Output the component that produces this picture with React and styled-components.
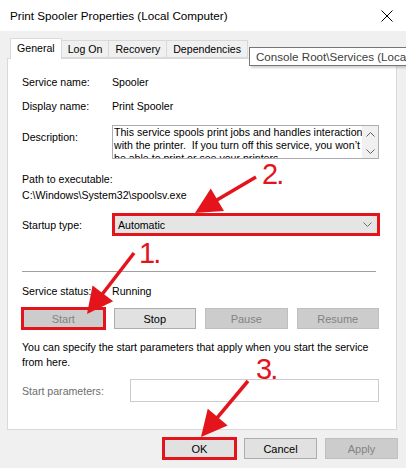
import React from 'react'
import styled, { createGlobalStyle } from 'styled-components'

const RED = '#e3141c'

const GlobalStyle = createGlobalStyle`
  html, body {
    margin: 0;
    padding: 0;
    background: #f0f0f0;
  }
  body {
    font-family: "Liberation Sans", Arial, sans-serif;
    font-size: 10.6px;
    color: #000;
  }
`

const Window = styled.div`
  position: relative;
  width: 406px;
  height: 468px;
  overflow: hidden;
  background: #f0f0f0;
  display: flex;
  flex-direction: column;
`

const TitleBar = styled.div`
  flex: none;
  height: 31px;
  background: #fff;
  display: flex;
  align-items: center;
  justify-content: space-between;
  padding: 0 13px 0 10px;
  font-size: 11.7px;
  color: #000;
`

const TabStrip = styled.div`
  display: flex;
  align-items: flex-end;
  height: 20px;
  margin-top: 7px;
  padding-left: 10px;
  position: relative;
  z-index: 1;
`

const Tab = styled.div`
  box-sizing: border-box;
  height: ${p => (p.active ? '21px' : '18px')};
  margin-bottom: ${p => (p.active ? '-1px' : '0')};
  padding: 0 6px;
  display: flex;
  align-items: center;
  background: ${p => (p.active ? '#fff' : '#f0f0f0')};
  border: 1px solid #d9d9d9;
  border-bottom: ${p => (p.active ? 'none' : '1px solid #d9d9d9')};
  border-left: ${p => (p.first ? '1px solid #d9d9d9' : 'none')};
  padding-bottom: ${p => (p.active ? '3px' : '0')};
`

const Tooltip = styled.div`
  position: absolute;
  left: 249px;
  top: 47px;
  height: 19px;
  box-sizing: border-box;
  padding: 0 6px;
  display: flex;
  align-items: center;
  background: #fff;
  border: 1px solid #767676;
  box-shadow: 2px 2px 2px rgba(0, 0, 0, 0.18);
  white-space: nowrap;
  font-size: 11.6px;
  color: #3c3c3c;
  z-index: 2;
`

const Panel = styled.div`
  box-sizing: border-box;
  margin-left: 7px;
  width: 390px;
  height: 372px;
  background: #fff;
  border: 1px solid #d9d9d9;
  padding: 13px 17px 0 14px;
  display: flex;
  flex-direction: column;
`

const Field = styled.div`
  display: grid;
  grid-template-columns: ${p => p.labelWidth || 90}px 1fr;
  align-items: ${p => (p.top ? 'start' : 'center')};
  height: ${p => p.h}px;
  margin-top: ${p => p.gap || 0}px;
`

const Label = styled.span`
  color: ${p => (p.disabled ? '#6d6d6d' : '#000')};
  padding-top: ${p => p.offset || 0}px;
  line-height: 16px;
`

const DescBox = styled.div`
  box-sizing: border-box;
  height: 34px;
  border: 1px solid #abadb3;
  display: flex;
  overflow: hidden;
`

const DescText = styled.div`
  flex: 1;
  padding-left: 1px;
  line-height: 13px;
  white-space: pre;
  overflow: hidden;
`

const ScrollBar = styled.div`
  flex: none;
  width: 16px;
  background: #f0f0f0;
  display: flex;
  flex-direction: column;
  justify-content: space-between;
  align-items: center;
  padding: 6px 0 4px;
`

const Block = styled.div`
  margin-top: ${p => p.gap || 0}px;
  line-height: ${p => p.lh || 16}px;
`

const Combo = styled.div`
  box-sizing: border-box;
  height: 21px;
  margin-left: 1px;
  background: #e5e5e5;
  border: 1px solid #acacac;
  padding: 0 6px 0 4px;
  display: flex;
  align-items: center;
  justify-content: space-between;
  outline: 3px solid ${RED};
  outline-offset: -2px;
`

const Separator = styled.div`
  height: 1px;
  background: #a0a0a0;
  margin: 34px 3px 0 0;
`

const ButtonRow = styled.div`
  display: grid;
  grid-template-columns: repeat(4, 1fr);
  column-gap: 9px;
  margin-top: 9px;
`

const Button = styled.div`
  box-sizing: border-box;
  height: 21px;
  width: ${p => (p.w ? `${p.w}px` : 'auto')};
  display: flex;
  align-items: center;
  justify-content: center;
  background: ${p => (p.disabled ? '#cccccc' : '#e1e1e1')};
  border: 1px solid ${p => (p.disabled ? '#bfbfbf' : '#adadad')};
  color: ${p => (p.disabled ? '#838383' : '#000')};
  font-size: 11px;
  outline: ${p => (p.marked ? `3px solid ${RED}` : 'none')};
  outline-offset: -2px;
`

const Input = styled.div`
  box-sizing: border-box;
  height: 23px;
  background: #fff;
  border: 1px solid #cccccc;
`

const Footer = styled.div`
  display: flex;
  justify-content: flex-end;
  gap: 8px;
  padding: 8px 8px 0 0;
`

const Overlay = styled.svg`
  position: absolute;
  left: 0;
  top: 0;
  pointer-events: none;
  z-index: 3;
`

const Step = styled.span`
  position: absolute;
  left: ${p => p.x}px;
  top: ${p => p.y}px;
  font-family: "Liberation Sans", Arial, sans-serif;
  font-size: 29px;
  line-height: 1;
  letter-spacing: -2px;
  color: ${RED};
  z-index: 3;
`

const arrows = [
  { from: [256, 177], to: [195, 213] },
  { from: [134, 253], to: [87, 314] },
  { from: [248, 381], to: [201, 437] },
]

function Arrow({ from, to }) {
  const [x1, y1] = from
  const [x2, y2] = to
  const len = Math.hypot(x2 - x1, y2 - y1)
  const dx = (x2 - x1) / len
  const dy = (y2 - y1) / len
  const L = 26
  const W = 13
  const bx = x2 - dx * L
  const by = y2 - dy * L
  const pts = [
    [x2, y2],
    [bx - dy * W, by + dx * W],
    [bx + dy * W, by - dx * W],
  ]
  return (
    <g>
      <line x1={x1} y1={y1} x2={bx + dx * 2} y2={by + dy * 2} stroke={RED} strokeWidth="3.5" />
      <polygon points={pts.map(p => p.join(',')).join(' ')} fill={RED} />
    </g>
  )
}

function Chevron({ up, color = '#606060' }) {
  return (
    <svg width="9" height="5" viewBox="0 0 9 5">
      <polyline
        points={up ? '0.5,4.5 4.5,0.5 8.5,4.5' : '0.5,0.5 4.5,4.5 8.5,0.5'}
        fill="none"
        stroke={color}
        strokeWidth="1"
      />
    </svg>
  )
}

function CloseIcon() {
  return (
    <svg width="12" height="12" viewBox="0 0 12 12">
      <path d="M0.5 0.5 L11.5 11.5 M11.5 0.5 L0.5 11.5" stroke="#000" strokeWidth="1" />
    </svg>
  )
}

export default function App() {
  return (
    <>
      <GlobalStyle />
      <Window>
        <TitleBar>
          <span>Print Spooler Properties (Local Computer)</span>
          <CloseIcon />
        </TitleBar>

        <TabStrip>
          <Tab active first>General</Tab>
          <Tab>Log On</Tab>
          <Tab>Recovery</Tab>
          <Tab>Dependencies</Tab>
        </TabStrip>
        <Tooltip>Console Root\Services (Local)</Tooltip>

        <Panel>
          <Field h={20}>
            <Label>Service name:</Label>
            <span>Spooler</span>
          </Field>
          <Field h={20} gap={4}>
            <Label>Display name:</Label>
            <span>Print Spooler</span>
          </Field>
          <Field h={34} gap={9} top>
            <Label offset={4}>Description:</Label>
            <DescBox>
              <DescText>
                {'This service spools print jobs and handles interaction\nwith the printer.  If you turn off this service, you won\u2019t\nbe able to print or see your printers.'}
              </DescText>
              <ScrollBar>
                <Chevron up />
                <Chevron />
              </ScrollBar>
            </DescBox>
          </Field>
          <Block gap={12}>
            <div>Path to executable:</div>
            <div>{'C:\\Windows\\System32\\spoolsv.exe'}</div>
          </Block>
          <Field h={25} gap={9}>
            <Label>Startup type:</Label>
            <Combo>
              <span>Automatic</span>
              <Chevron color="#707070" />
            </Combo>
          </Field>
          <Separator />
          <Field h={16} gap={11}>
            <Label>Service status:</Label>
            <span>Running</span>
          </Field>
          <ButtonRow>
            <Button disabled marked>Start</Button>
            <Button>Stop</Button>
            <Button disabled>Pause</Button>
            <Button disabled>Resume</Button>
          </ButtonRow>
          <Block gap={11} lh={15}>
            You can specify the start parameters that apply when you start the service
            <br />
            from here.
          </Block>
          <Field h={23} gap={9} labelWidth={108}>
            <Label disabled>Start parameters:</Label>
            <Input />
          </Field>
        </Panel>

        <Footer>
          <Button w={73} marked>OK</Button>
          <Button w={73}>Cancel</Button>
          <Button w={73} disabled>Apply</Button>
        </Footer>

        <Step x={262} y={160}>2.</Step>
        <Step x={139} y={239}>1.</Step>
        <Step x={256} y={355}>3.</Step>
        <Overlay width="406" height="468" viewBox="0 0 406 468">
          {arrows.map((a, i) => (
            <Arrow key={i} {...a} />
          ))}
        </Overlay>
      </Window>
    </>
  )
}
